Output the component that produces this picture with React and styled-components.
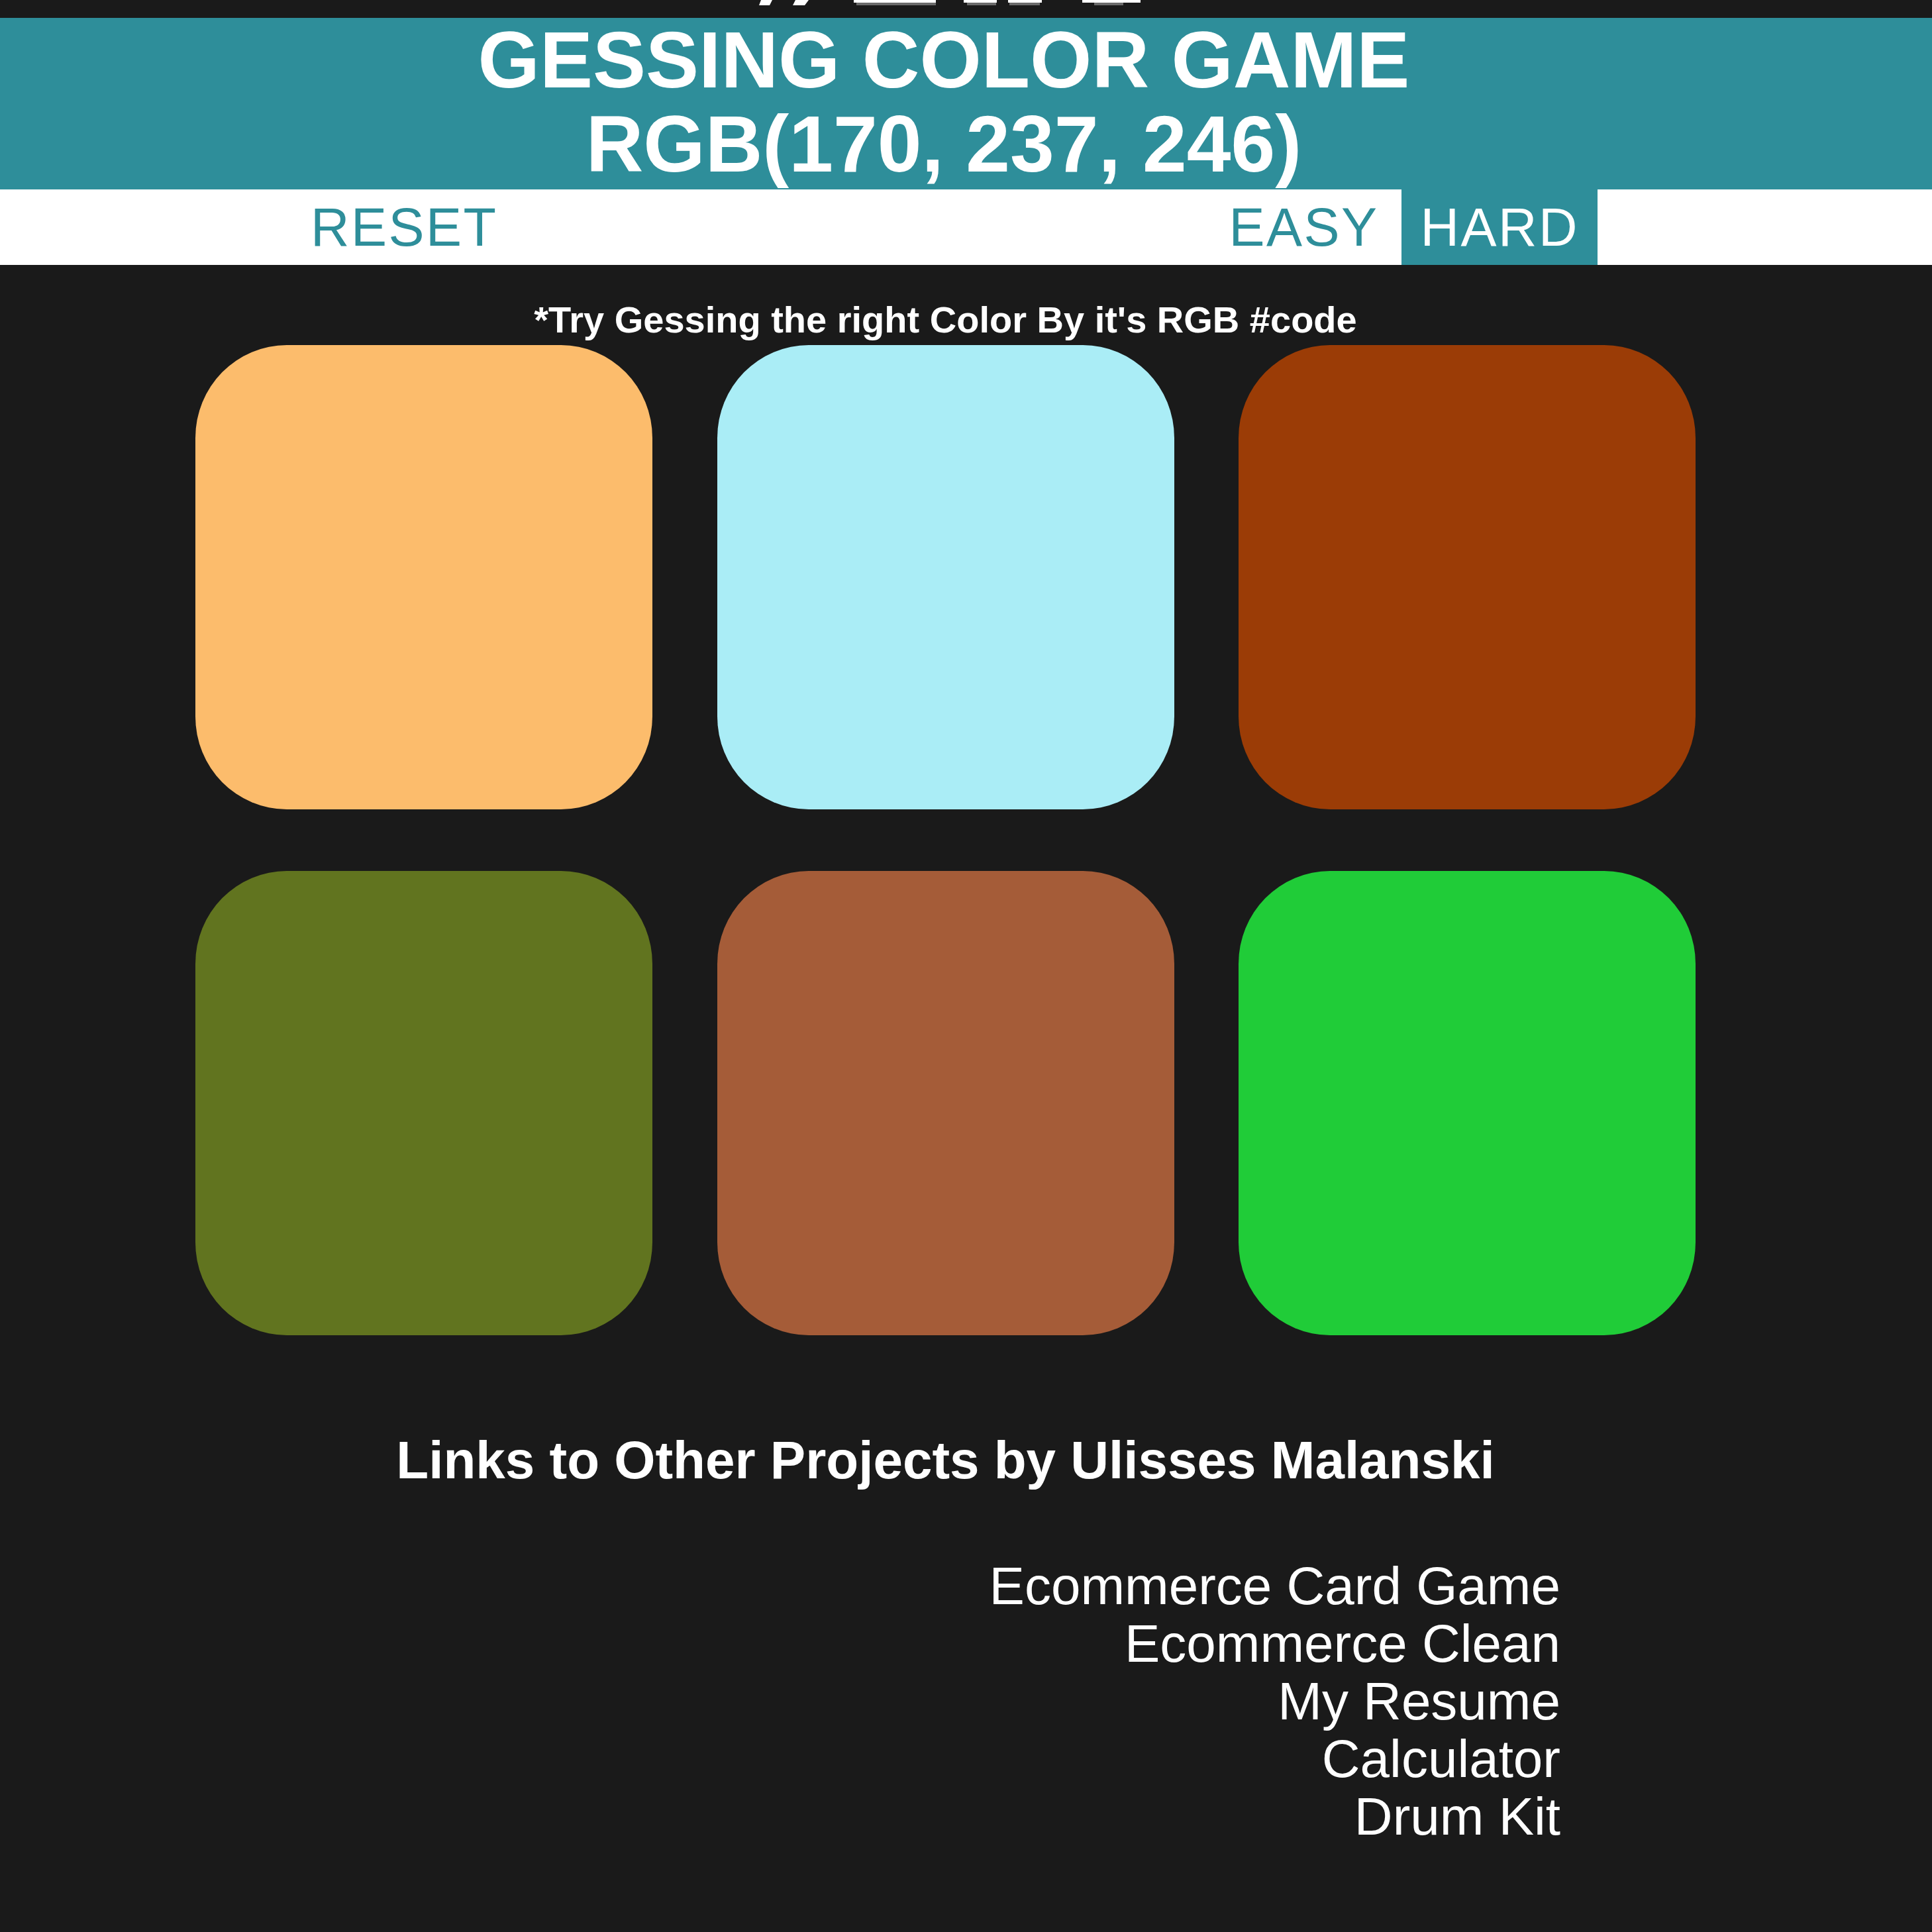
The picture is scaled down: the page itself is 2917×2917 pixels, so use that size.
import React from "react";
import styled, { createGlobalStyle } from "styled-components";

const TEAL = "#2e8e9a";
const DARK = "#1a1a1a";

const GlobalStyle = createGlobalStyle`
  html, body {
    margin: 0;
    padding: 0;
    background: ${DARK};
  }
  body {
    font-family: "Liberation Sans", Arial, sans-serif;
    width: 2917px;
    min-height: 2917px;
  }
  * { box-sizing: border-box; }
`;

const Page = styled.div`
  width: 2917px;
  min-height: 2917px;
  background: ${DARK};
  display: flex;
  flex-direction: column;
`;

const TopStrip = styled.div`
  height: 27px;
  background: ${DARK};
  overflow: hidden;
  svg { display: block; }
`;

const Header = styled.h1`
  margin: 0;
  background: ${TEAL};
  color: #ffffff;
  font-size: 120px;
  font-weight: 700;
  line-height: 127px;
  text-align: center;
  text-transform: uppercase;
  padding: 0 67px 5px 0;
`;

const Stripe = styled.div`
  height: 114px;
  background: #ffffff;
  display: flex;
  justify-content: space-between;
  align-items: stretch;
  padding: 0 505px 0 441px;
`;

const ModeGroup = styled.div`
  display: flex;
  gap: 7px;
`;

const StripeButton = styled.button`
  border: none;
  outline: none;
  margin: 0;
  height: 100%;
  padding: 0 28px;
  font-family: inherit;
  font-size: 81px;
  font-weight: 400;
  letter-spacing: 2.5px;
  text-transform: uppercase;
  cursor: pointer;
  background: ${(p) => (p.$selected ? TEAL : "transparent")};
  color: ${(p) => (p.$selected ? "#ffffff" : TEAL)};
`;

const Main = styled.main`
  padding-right: 62px;
  display: flex;
  flex-direction: column;
  align-items: center;
`;

const Hint = styled.p`
  margin: 51px 0 0;
  color: #ffffff;
  font-size: 56px;
  font-weight: 700;
  line-height: 63px;
  text-align: center;
`;

const Board = styled.div`
  margin-top: 7px;
  display: grid;
  grid-template-columns: repeat(3, 690px);
  grid-auto-rows: 701px;
  column-gap: 97.5px;
  row-gap: 93px;
`;

const Square = styled.div`
  border-radius: 20%;
  background: ${(p) => p.$color};
  cursor: pointer;
`;

const LinksTitle = styled.h2`
  margin: 143px 0 0;
  color: #ffffff;
  font-size: 80px;
  font-weight: 700;
  line-height: 92px;
  text-align: center;
`;

const LinkList = styled.ul`
  list-style: none;
  margin: 100px 0 0;
  padding: 0 561px 0 0;
  display: flex;
  flex-direction: column;
  align-items: flex-end;
`;

const LinkItem = styled.li`
  font-size: 80px;
  line-height: 87px;
`;

const ProjectLink = styled.a`
  color: #ffffff;
  text-decoration: none;
`;

const squares = [
  "rgb(252, 188, 108)",
  "rgb(170, 237, 246)",
  "rgb(155, 60, 6)",
  "rgb(97, 116, 31)",
  "rgb(165, 92, 56)",
  "rgb(32, 204, 56)",
];

const links = [
  "Ecommerce Card Game",
  "Ecommerce Clean",
  "My Resume",
  "Calculator",
  "Drum Kit",
];

function CutOffMark() {
  return (
    <svg width="2917" height="27" viewBox="0 0 2917 27" aria-hidden="true">
      <polygon points="1149,0 1166,0 1162,8 1146,8" fill="#ffffff" />
      <polygon points="1201,0 1221,0 1215,8 1197,8" fill="#ffffff" />
      <rect x="1293" y="4" width="120" height="4" fill="#6b6b6b" />
      <rect x="1289" y="0" width="124" height="4" fill="#ffffff" />
      <rect x="1460" y="4" width="44" height="4" fill="#6b6b6b" />
      <rect x="1455" y="0" width="50" height="4" fill="#ffffff" />
      <rect x="1524" y="4" width="46" height="4" fill="#6b6b6b" />
      <rect x="1522" y="0" width="51" height="4" fill="#ffffff" />
      <rect x="1652" y="4" width="44" height="4" fill="#6b6b6b" />
      <rect x="1634" y="0" width="88" height="4" fill="#ffffff" />
    </svg>
  );
}

export default function App() {
  return (
    <>
      <GlobalStyle />
      <Page>
        <TopStrip>
          <CutOffMark />
        </TopStrip>
        <Header>
          Gessing Color Game
          <br />
          RGB(170, 237, 246)
        </Header>
        <Stripe>
          <StripeButton>Reset</StripeButton>
          <ModeGroup>
            <StripeButton>Easy</StripeButton>
            <StripeButton $selected>Hard</StripeButton>
          </ModeGroup>
        </Stripe>
        <Main>
          <Hint>*Try Gessing the right Color By it's RGB #code</Hint>
          <Board>
            {squares.map((c, i) => (
              <Square key={i} $color={c} />
            ))}
          </Board>
          <LinksTitle>Links to Other Projects by Ulisses Malanski</LinksTitle>
        </Main>
        <LinkList>
          {links.map((l) => (
            <LinkItem key={l}>
              <ProjectLink href="#">{l}</ProjectLink>
            </LinkItem>
          ))}
        </LinkList>
      </Page>
    </>
  );
}
